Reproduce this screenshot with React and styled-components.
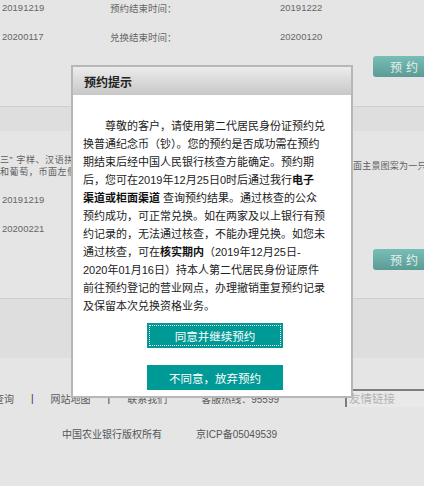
import styled, { createGlobalStyle } from "styled-components";

const GlobalStyle = createGlobalStyle`
  html, body {
    margin: 0;
    padding: 0;
    background: #e5e5e5;
    overflow: hidden;
  }
`;

const noticeLines = [
  { indent: true, text: "尊敬的客户，请使用第二代居民身份证预约兑" },
  { text: "换普通纪念币（钞）。您的预约是否成功需在预约" },
  { text: "期结束后经中国人民银行核查方能确定。预约期" },
  { text: "后，您可在2019年12月25日0时后通过我行", bold: "电子" },
  { bold: "渠道或柜面渠道", text: " 查询预约结果。通过核查的公众", boldFirst: true },
  { text: "预约成功，可正常兑换。如在两家及以上银行有预" },
  { text: "约记录的，无法通过核查，不能办理兑换。如您未" },
  { text: "通过核查，可在", bold: "核实期内", after: "（2019年12月25日-" },
  { text: "2020年01月16日）持本人第二代居民身份证原件" },
  { text: "前往预约登记的营业网点，办理撤销重复预约记录" },
  { text: "及保留本次兑换资格业务。" },
];

export default function App() {
  return (
    <Page>
      <GlobalStyle />

      <InfoRow>
        <span>20191219</span>
        <span>预约结束时间：</span>
        <span>20191222</span>
      </InfoRow>
      <InfoRow gap={14}>
        <span>20200117</span>
        <span>兑换结束时间：</span>
        <span>20200120</span>
      </InfoRow>
      <ActionRow gap={12}>
        <ReserveButton>预约</ReserveButton>
      </ActionRow>

      <Divider gap={29} />
      <Band height={24} />

      <Desc>
        <DescLeft>
          <div>三” 字样、汉语拼</div>
          <div>和葡萄，币面左侧</div>
        </DescLeft>
        <DescRight>面主景图案为一只</DescRight>
      </Desc>

      <InfoRow gap={14}>
        <span>20191219</span>
      </InfoRow>
      <InfoRow gap={14}>
        <span>20200221</span>
      </InfoRow>
      <ActionRow gap={13}>
        <ReserveButton>预约</ReserveButton>
      </ActionRow>

      <Divider gap={28} />
      <Band height={59} />

      <FooterNav>
        <NavItem first>查询</NavItem>
        <NavSep>|</NavSep>
        <NavItem>网站地图</NavItem>
        <NavSep>|</NavSep>
        <NavItem>联系我们</NavItem>
        <NavItem wide>客服热线：95599</NavItem>
        <FriendLinks>友情链接</FriendLinks>
      </FooterNav>

      <Copyright>
        <span>中国农业银行版权所有</span>
        <span>京ICP备05049539</span>
      </Copyright>

      <Dialog>
        <DialogHeader>预约提示</DialogHeader>
        <DialogBody>
          <Notice>
            {noticeLines.map((line, i) => (
              <NoticeLine key={i} indent={line.indent}>
                {line.boldFirst ? (
                  <>
                    <b>{line.bold}</b>
                    {line.text}
                  </>
                ) : (
                  <>
                    {line.text}
                    {line.bold && <b>{line.bold}</b>}
                    {line.after}
                  </>
                )}
              </NoticeLine>
            ))}
          </Notice>
          <ButtonGroup>
            <DialogButton focused>同意并继续预约</DialogButton>
            <DialogButton>不同意，放弃预约</DialogButton>
          </ButtonGroup>
        </DialogBody>
      </Dialog>
    </Page>
  );
}

const Page = styled.div`
  position: relative;
  width: 424px;
  height: 486px;
  overflow: hidden;
  background: #e5e5e5;
  color: #666;
  font-family: "Liberation Sans", "Noto Sans CJK SC", sans-serif;
`;

const InfoRow = styled.div`
  display: grid;
  grid-template-columns: 108px 170px 1fr;
  align-items: center;
  height: 15px;
  margin-top: ${(p) => p.gap || 0}px;
  padding-left: 2px;
  font-size: 9.5px;
  color: #676767;
`;

const ActionRow = styled.div`
  display: flex;
  justify-content: flex-end;
  margin-top: ${(p) => p.gap}px;
`;

const ReserveButton = styled.div`
  display: flex;
  align-items: center;
  justify-content: center;
  width: 62px;
  height: 21px;
  margin-right: -11px;
  border-radius: 3px;
  background: linear-gradient(#78beb7, #5b9b95);
  color: #e4efed;
  font-size: 12px;
  letter-spacing: 4px;
  text-indent: 4px;
`;

const Divider = styled.div`
  height: 1px;
  margin-top: ${(p) => p.gap}px;
  background: #cfcfcf;
`;

const Band = styled.div`
  height: ${(p) => p.height}px;
  background: #dedede;
`;

const Desc = styled.div`
  display: grid;
  grid-template-columns: 353px 1fr;
  align-items: center;
  margin-top: 23px;
  font-size: 9px;
  color: #5e5e5e;
  white-space: nowrap;
`;

const DescLeft = styled.div`
  padding-left: 0;
  line-height: 12px;
  letter-spacing: 0.6px;
`;

const DescRight = styled.div`
  line-height: 12px;
  letter-spacing: 0.2px;
`;

const FooterNav = styled.div`
  display: flex;
  align-items: center;
  height: 18px;
  margin-top: 31px;
  font-size: 10px;
  color: #5a5a5a;
  white-space: nowrap;
`;

const NavItem = styled.span`
  margin-left: ${(p) => (p.first ? -6 : p.wide ? 34 : 17)}px;
`;

const NavSep = styled.span`
  margin-left: 17px;
  color: #333;
`;

const FriendLinks = styled.div`
  box-sizing: border-box;
  align-self: flex-start;
  width: 90px;
  height: 18px;
  margin-left: 66px;
  padding: 1px 0 0 2px;
  border-top: 2px solid #7d7d7d;
  border-left: 2px solid #7d7d7d;
  background: #e9e9e9;
  color: #b3b3b3;
  font-size: 11.5px;
  line-height: 14px;
`;

const Copyright = styled.div`
  display: flex;
  gap: 34px;
  height: 14px;
  align-items: center;
  margin-top: 19px;
  padding-left: 62px;
  font-size: 10px;
  color: #555;
`;

const Dialog = styled.div`
  position: absolute;
  left: 71px;
  top: 65px;
  box-sizing: border-box;
  width: 282px;
  height: 333px;
  display: flex;
  flex-direction: column;
  border: 2px solid #b7b7b7;
  background: #fff;
  font-family: "Liberation Sans", "Noto Sans CJK SC", sans-serif;
`;

const DialogHeader = styled.div`
  display: flex;
  align-items: center;
  height: 28px;
  padding-left: 11px;
  background: linear-gradient(#ececec, #c7c7c7);
  color: #222;
  font-size: 12px;
  font-weight: 700;
`;

const DialogBody = styled.div`
  display: flex;
  flex-direction: column;
  padding: 22px 10px 0;
`;

const Notice = styled.div`
  font-size: 11px;
  line-height: 18px;
  color: #222;
  white-space: nowrap;

  b {
    font-weight: 700;
    color: #111;
  }
`;

const NoticeLine = styled.div`
  text-indent: ${(p) => (p.indent ? 22 : 0)}px;
`;

const ButtonGroup = styled.div`
  display: flex;
  flex-direction: column;
  align-items: center;
  gap: 17px;
  margin-top: 8px;
  padding-left: 6px;
`;

const DialogButton = styled.div`
  display: flex;
  align-items: center;
  justify-content: center;
  width: 136px;
  height: 25px;
  background: #009a96;
  color: #fff;
  font-size: 11.5px;
  outline: ${(p) => (p.focused ? "1px dotted #fff" : "none")};
  outline-offset: -3px;
`;
